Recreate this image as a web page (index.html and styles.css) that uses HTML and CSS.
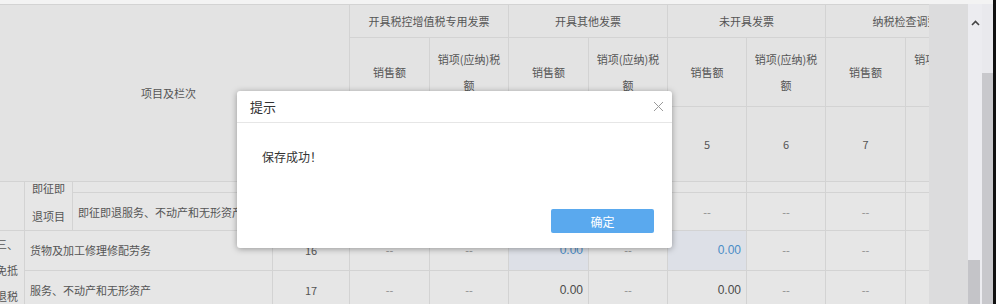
FILE: index.html
```html
<!DOCTYPE html>
<html lang="zh-CN">
<head>
  <meta charset="UTF-8">
  <title>增值税纳税申报表附列资料</title>
  <link rel="stylesheet" href="styles.css">
</head>
<body>
  <div class="screen">
    <div class="view">
      <div class="topline"></div>
      <div class="main">
        <div class="grid">
          <div class="grid-head">
            <table class="head">
              <colgroup>
                <col class="c-a"><col class="c-b"><col class="c-c"><col class="c-no">
                <col class="c-80"><col class="c-79"><col class="c-80"><col class="c-79">
                <col class="c-79"><col class="c-79"><col class="c-80"><col class="c-80">
              </colgroup>
              <tr class="r1">
                <th colspan="4" rowspan="3">项目及栏次</th>
                <th colspan="2">开具税控增值税专用发票</th>
                <th colspan="2">开具其他发票</th>
                <th colspan="2">未开具发票</th>
                <th colspan="2">纳税检查调整</th>
              </tr>
              <tr class="r2">
                <th>销售额</th><th>销项(应纳)税额</th>
                <th>销售额</th><th>销项(应纳)税额</th>
                <th>销售额</th><th>销项(应纳)税额</th>
                <th>销售额</th><th>销项(应纳)税额</th>
              </tr>
              <tr class="r3">
                <th>1</th><th>2</th><th>3</th><th>4</th>
                <th>5</th><th>6</th><th>7</th><th>8</th>
              </tr>
            </table>
          </div>
          <div class="grid-body">
            <table class="rows">
              <colgroup>
                <col class="c-a"><col class="c-b"><col class="c-c"><col class="c-no">
                <col class="c-80"><col class="c-79"><col class="c-80"><col class="c-79">
                <col class="c-79"><col class="c-79"><col class="c-80"><col class="c-80">
              </colgroup>
              <tr>
                <td rowspan="2"></td>
                <td rowspan="2" class="stack">即征即退项目</td>
                <td class="txt">即征即退货物及加工修理修配劳务</td>
                <td>14</td>
                <td class="nil">--</td><td class="nil">--</td><td class="nil">--</td><td class="nil">--</td>
                <td class="nil">--</td><td class="nil">--</td><td class="nil">--</td><td></td>
              </tr>
              <tr>
                <td class="txt">即征即退服务、不动产和无形资产</td>
                <td>15</td>
                <td class="nil">--</td><td class="nil">--</td><td class="nil">--</td><td class="nil">--</td>
                <td class="nil">--</td><td class="nil">--</td><td class="nil">--</td><td></td>
              </tr>
              <tr>
                <td rowspan="2" class="group">三、免抵退税</td>
                <td colspan="2" class="txt">货物及加工修理修配劳务</td>
                <td>16</td>
                <td class="nil">--</td><td class="nil">--</td>
                <td class="num edit">0.00</td><td class="nil">--</td>
                <td class="num edit">0.00</td><td class="nil">--</td>
                <td class="nil">--</td><td></td>
              </tr>
              <tr>
                <td colspan="2" class="txt">服务、不动产和无形资产</td>
                <td>17</td>
                <td class="nil">--</td><td class="nil">--</td>
                <td class="num">0.00</td><td class="nil">--</td>
                <td class="num">0.00</td><td class="nil">--</td>
                <td class="nil">--</td><td></td>
              </tr>
            </table>
          </div>
        </div>
        <div class="side"></div>
        <div class="track">
          <svg class="arrow" width="9" height="6" viewBox="0 0 9 6">
            <path d="M1 5 L4.5 1.5 L8 5" fill="none" stroke="#444" stroke-width="1.6"/>
          </svg>
          <div class="thumb"></div>
        </div>
        <div class="rail"></div>
      </div>
    </div>
    <div class="edge"></div>

    <div class="dialog">
      <div class="dialog-head">
        <span>提示</span>
        <svg width="11" height="11" viewBox="0 0 11 11">
          <path d="M1 1 L10 10 M10 1 L1 10" stroke="#9a9a9a" stroke-width="1"/>
        </svg>
      </div>
      <div class="dialog-body">保存成功！</div>
      <div class="dialog-foot">
        <button class="btn">确定</button>
      </div>
    </div>
  </div>
</body>
</html>
```

FILE: styles.css
```css
html, body {
  margin: 0;
  padding: 0;
  overflow: hidden;
}

body {
  font-family: "Noto Sans CJK SC", "Microsoft YaHei", sans-serif;
  font-size: 11px;
  color: #555555;
  background-color: #e5e5e5;
}

.screen {
  position: relative;
  display: flex;
  width: 996px;
  height: 304px;
}

.view {
  flex: 1;
  display: flex;
  flex-direction: column;
}

.topline {
  height: 4px;
  background-color: #f3f3f3;
}

.main {
  flex: 1;
  display: flex;
  min-height: 0;
}

/* table area, scrolled a little to the right */
.grid {
  width: 929px;
  overflow: hidden;
  display: flex;
  flex-direction: column;
}

.grid-head, .grid-body {
  margin-left: -13px;
}

.grid-body {
  flex: 1;
  overflow: hidden;
}

.grid-body table {
  margin-top: -28px;
}

table {
  border-collapse: collapse;
  table-layout: fixed;
  width: 998px;
}

.c-a { width: 37px; }
.c-b { width: 48px; }
.c-c { width: 200px; }
.c-no { width: 77px; }
.c-80 { width: 80px; }
.c-79 { width: 79px; }

th, td {
  border: 1px solid #d3d3d3;
  padding: 0 6px;
  text-align: center;
  font-weight: normal;
  overflow: hidden;
}

.head th {
  background-color: #e3e3e3;
  line-height: 26px;
}

.r1 { height: 33px; }
.r2 { height: 69px; }
.r3 { height: 75px; }

.rows tr {
  height: 38px;
}

.rows td {
  background-color: #e6e6e6;
  line-height: 16px;
}

.rows td.stack {
  vertical-align: bottom;
  line-height: 28px;
}

.rows td.group {
  line-height: 26px;
  padding: 0 5px 0 7px;
}

.rows td.txt {
  text-align: left;
  padding-left: 5px;
  white-space: nowrap;
}

.rows td.nil {
  color: #8a8a8a;
}

.rows td.num {
  text-align: right;
  padding-right: 5px;
  color: #4a4a4a;
  font-family: "Liberation Sans", Arial, sans-serif;
  font-size: 12px;
}

.rows td.edit {
  background-color: #dde0e7;
  color: #4a8cc6;
}

/* right hand panel and scroll bars */
.side {
  width: 39px;
  background-color: #dcdcdd;
}

.track {
  width: 14px;
  background-color: #ececf0;
  display: flex;
  flex-direction: column;
  align-items: center;
}

.arrow {
  margin-top: 16px;
}

.thumb {
  margin-top: auto;
  width: 12px;
  height: 44px;
  align-self: flex-start;
  background-color: #c4c4c8;
}

.rail {
  width: 11px;
  background: linear-gradient(#e9e9ed 0, #e9e9ed 69px, #c8c8cc 69px);
}

.edge {
  width: 3px;
  background-color: #111111;
}

/* message box */
.dialog {
  position: absolute;
  left: 237px;
  top: 91px;
  width: 435px;
  height: 157px;
  background-color: #ffffff;
  border-radius: 3px;
  box-shadow: 0 1px 6px rgba(0, 0, 0, 0.35);
  display: flex;
  flex-direction: column;
  color: #333333;
}

.dialog-head {
  height: 31px;
  border-bottom: 1px solid #e6e6e6;
  display: flex;
  align-items: center;
  justify-content: space-between;
  padding: 0 8px 0 13px;
  font-size: 13px;
}

.dialog-body {
  flex: 1;
  padding: 26px 25px 0;
  font-size: 12px;
  line-height: 16px;
}

.dialog-foot {
  display: flex;
  justify-content: flex-end;
  padding: 0 18px 15px;
}

.btn {
  width: 103px;
  height: 24px;
  border: none;
  border-radius: 2px;
  background-color: #5aa9ee;
  color: #ffffff;
  font-family: "Noto Sans CJK SC", sans-serif;
  font-size: 12px;
  padding: 0;
}
```
